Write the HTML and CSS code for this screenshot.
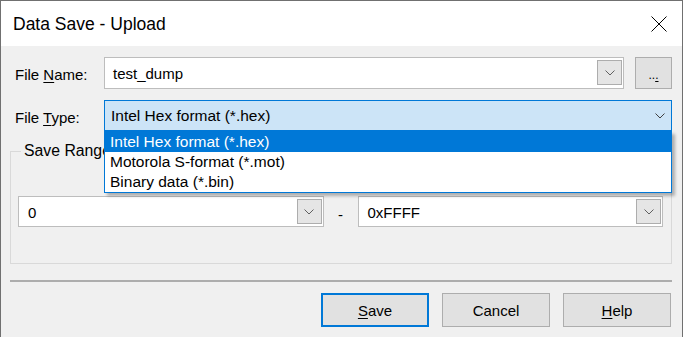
FILE: index.html
```html
<!DOCTYPE html>
<html>
<head>
<meta charset="utf-8">
<link rel="stylesheet" href="styles.css">
</head>
<body>
<div class="window">
  <div class="titlebar">
    <span class="title">Data Save - Upload</span>
    <svg class="close" width="16" height="16" viewBox="0 0 16 16"><path d="M0.5 0.5L15.5 15.5M15.5 0.5L0.5 15.5" stroke="#000" stroke-width="1" fill="none"/></svg>
  </div>
  <div class="content">
    <div class="row">
      <label class="label">File <u>N</u>ame:</label>
      <div class="combo">
        <span class="combo-text">test_dump</span>
        <span class="drop-btn"><svg width="10" height="6" viewBox="0 0 10 6"><path d="M0.5 0.5L5 5L9.5 0.5" stroke="#606060" stroke-width="1" fill="none"/></svg></span>
      </div>
      <button class="browse"><span>..<u>.</u></span></button>
    </div>
    <div class="row row-type">
      <label class="label">File <u>T</u>ype:</label>
      <div class="combo combo-selected">
        <span class="combo-text">Intel Hex format (*.hex)</span>
        <svg class="chev" width="10" height="6" viewBox="0 0 10 6"><path d="M0.5 0.5L5 5L9.5 0.5" stroke="#404040" stroke-width="1" fill="none"/></svg>
        <ul class="dropdown">
          <li class="item active">Intel Hex format (*.hex)</li>
          <li class="item">Motorola S-format (*.mot)</li>
          <li class="item">Binary data (*.bin)</li>
        </ul>
      </div>
    </div>
    <fieldset class="group">
      <legend class="group-label">Save Range</legend>
      <div class="range">
        <div class="combo combo-range">
          <span class="combo-text">0</span>
          <span class="drop-btn"><svg width="10" height="6" viewBox="0 0 10 6"><path d="M0.5 0.5L5 5L9.5 0.5" stroke="#606060" stroke-width="1" fill="none"/></svg></span>
        </div>
        <span class="dash">-</span>
        <div class="combo combo-range">
          <span class="combo-text">0xFFFF</span>
          <span class="drop-btn"><svg width="10" height="6" viewBox="0 0 10 6"><path d="M0.5 0.5L5 5L9.5 0.5" stroke="#606060" stroke-width="1" fill="none"/></svg></span>
        </div>
      </div>
    </fieldset>
    <div class="separator"></div>
    <div class="buttons">
      <button class="btn btn-default"><u>S</u>ave</button>
      <button class="btn">Cancel</button>
      <button class="btn"><u>H</u>elp</button>
    </div>
  </div>
</div>
</body>
</html>
```

FILE: styles.css
```css
* { box-sizing: border-box; }
html, body { margin: 0; padding: 0; }
body {
  width: 683px;
  height: 337px;
  overflow: hidden;
  background: #f0f0f0;
  font-family: "Liberation Sans", Arial, sans-serif;
  font-size: 15px;
  color: #000;
}
u { text-underline-offset: 2px; text-decoration-thickness: 1px; }
.window {
  width: 683px;
  height: 337px;
  border: 1px solid #707070;
  border-bottom: none;
  background: #f0f0f0;
  overflow: hidden;
}
.titlebar {
  height: 45px;
  background: #fff;
  display: flex;
  align-items: center;
  justify-content: space-between;
  padding-left: 12px;
}
.title {
  font-size: 17.5px;
  padding-top: 2px;
}
.close { margin-right: 15px; display: block; }
.content {
  padding: 10px 10px 0 9px;
}
.row {
  display: flex;
  align-items: center;
}
.row-type { margin-top: 11px; }
.label {
  width: 94px;
  flex: none;
  padding-left: 5px;
  padding-top: 3px;
}
.combo {
  flex: 1;
  height: 32px;
  border: 1px solid #bdbdbd;
  background: #fff;
  display: flex;
  align-items: center;
  padding-left: 8px;
  min-width: 0;
}
.combo-text { white-space: nowrap; padding-top: 1px; }
.drop-btn {
  margin-left: auto;
  margin-right: 1px;
  width: 25px;
  height: 25px;
  border: 1px solid #adadad;
  background: #e5e5e5;
  display: flex;
  align-items: center;
  justify-content: center;
}
.drop-btn svg { display: block; }
.browse {
  flex: none;
  width: 37px;
  height: 32px;
  margin-left: 11px;
  align-self: flex-start;
  margin-top: 1px;
  border: 1px solid #adadad;
  background: #e1e1e1;
  font-family: inherit;
  font-size: 12px;
  line-height: 1;
  padding: 0 0 7px 0;
  display: flex;
  align-items: flex-end;
  justify-content: center;
  color: #000;
}
.combo-selected {
  position: relative;
  height: 31px;
  border-color: #0078d7;
  background: #cce4f7;
  padding-left: 6px;
  font-size: 15.5px;
}
.chev { margin-left: auto; margin-right: 6px; display: block; }
.dropdown {
  position: absolute;
  left: -1px;
  right: -1px;
  top: calc(100% + 1px);
  margin: 0;
  padding: 0;
  list-style: none;
  background: #fff;
  border: 1px solid #0078d7;
  box-shadow: 3px 3px 3px rgba(0, 0, 0, 0.28);
  z-index: 10;
}
.item {
  height: 20px;
  line-height: 20px;
  padding-left: 5px;
  font-size: 15.5px;
  white-space: nowrap;
}
.item.active { background: #0078d7; color: #fff; }
.group {
  margin: 11px 0 0 0;
  padding: 36px 8px 36px 7px;
  border: 1px solid #d9d9d9;
  min-width: 0;
}
.group-label {
  margin-left: 3px;
  padding: 0 3px;
  line-height: 18px;
  font-size: 15.8px;
}
.range {
  display: grid;
  grid-template-columns: 1fr 34px 1fr;
  align-items: center;
}
.combo-range {
  height: 31px;
  padding-left: 9px;
}
.dash {
  text-align: center;
  padding-top: 6px;
}
.separator {
  margin-top: 16px;
  height: 2px;
  background: #adadad;
}
.buttons {
  margin-top: 11px;
  display: flex;
  justify-content: flex-end;
  gap: 13px;
  padding-right: 1px;
}
.btn {
  width: 108px;
  height: 34px;
  border: 1px solid #adadad;
  background: #e1e1e1;
  font-family: inherit;
  font-size: 15px;
  color: #000;
  padding: 0;
}
.btn-default { border: 2px solid #0078d7; }
```
